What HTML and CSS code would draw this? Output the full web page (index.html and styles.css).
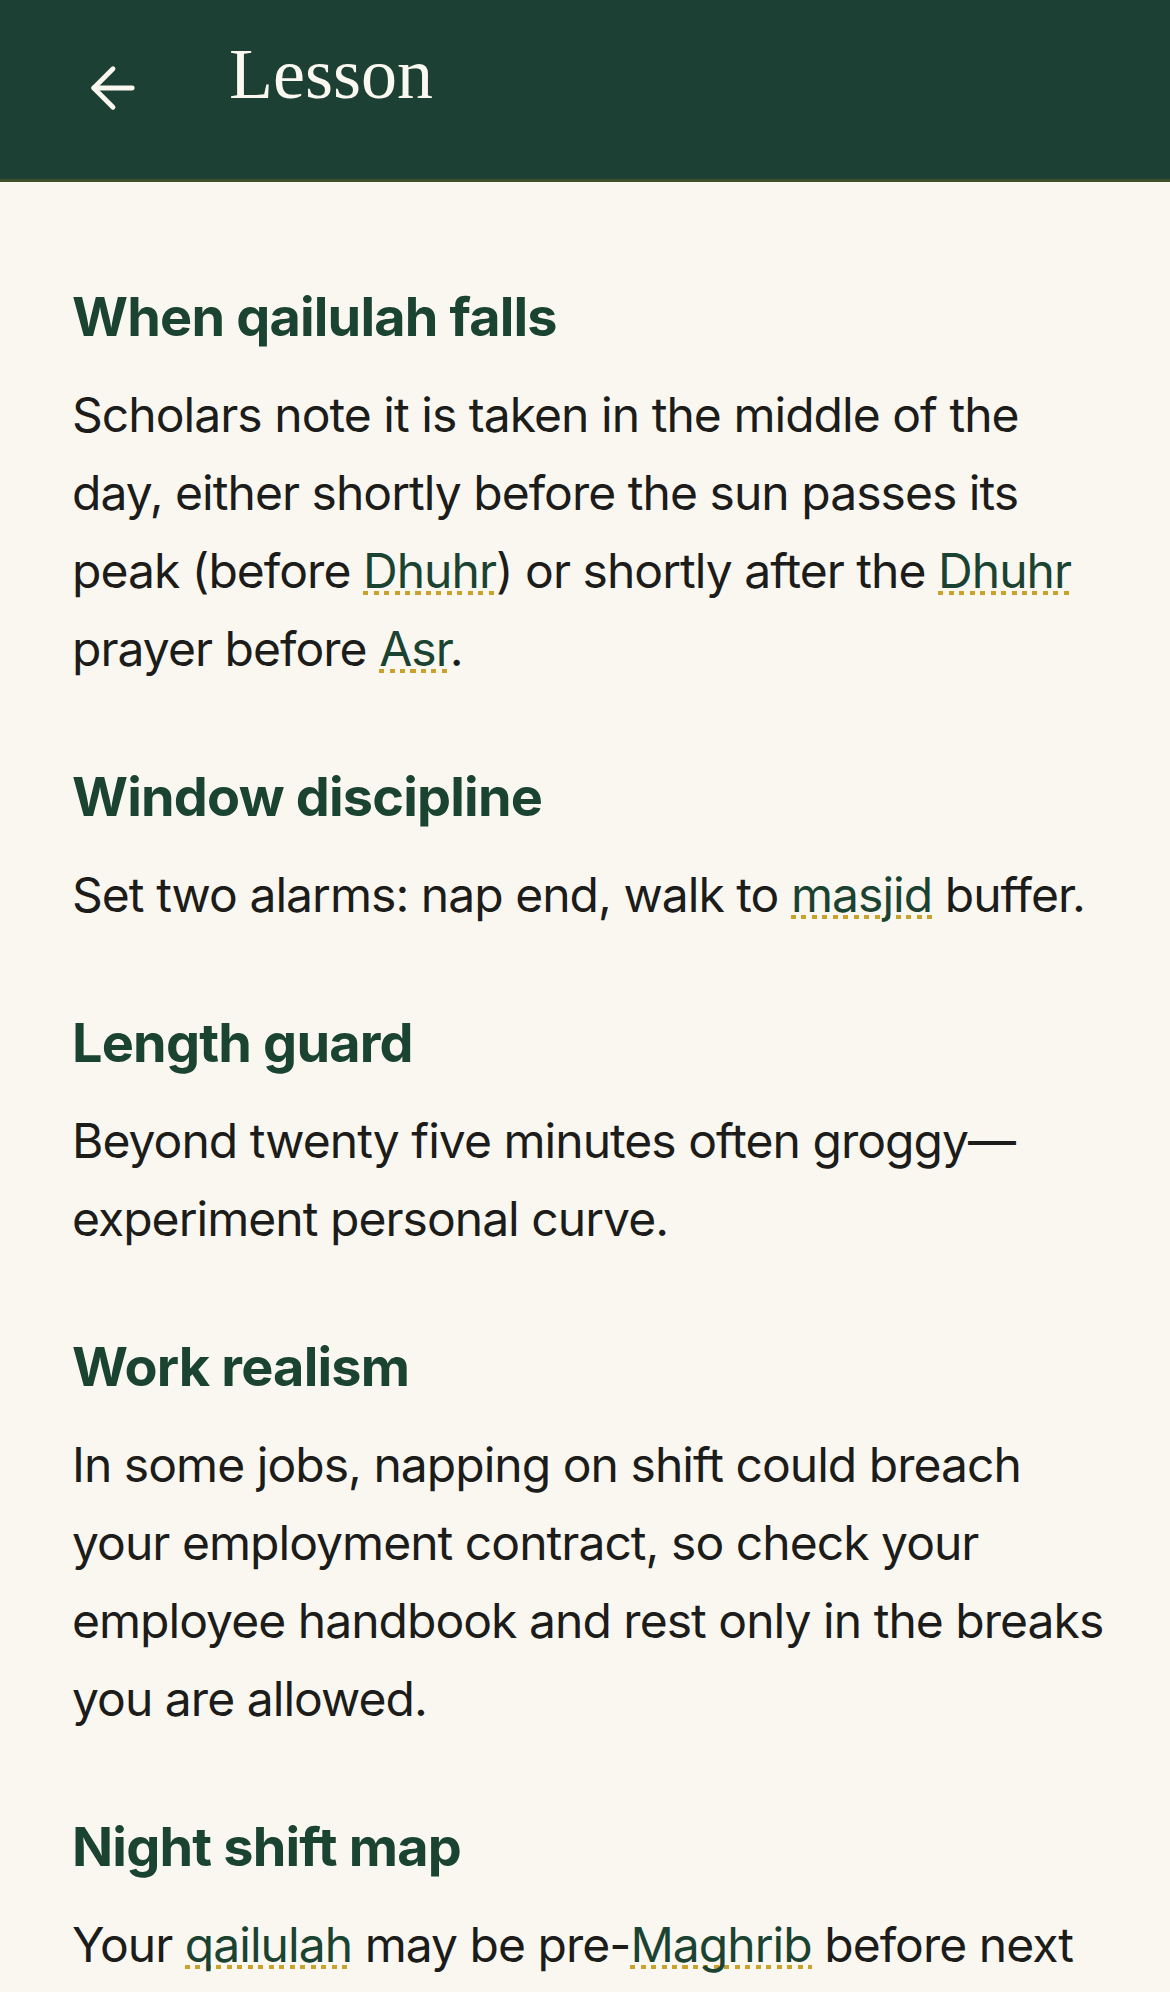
FILE: index.html
```html
<!DOCTYPE html>
<html lang="en">
<head>
<meta charset="utf-8">
<title>Lesson</title>
<link rel="stylesheet" href="styles.css">
</head>
<body>
<header class="topbar">
  <button class="back" aria-label="Back">
    <svg class="back-icon" viewBox="0 0 24 24" fill="none" stroke="currentColor" stroke-width="1.75" stroke-linecap="round" stroke-linejoin="round"><path d="M19 12H5"/><path d="M12 19l-7-7 7-7"/></svg>
  </button>
  <h1 class="title">Lesson</h1>
</header>
<main class="lesson">
  <section class="block">
    <h2 class="block-title">When qailulah falls</h2>
    <p class="block-text">Scholars note it is taken in the middle of the day, either shortly before the sun passes its peak (before <span class="term">Dhuhr</span>) or shortly after the <span class="term">Dhuhr</span> prayer before <span class="term">Asr</span>.</p>
  </section>
  <section class="block">
    <h2 class="block-title">Window discipline</h2>
    <p class="block-text">Set two alarms: nap end, walk to <span class="term">masjid</span> buffer.</p>
  </section>
  <section class="block">
    <h2 class="block-title">Length guard</h2>
    <p class="block-text">Beyond twenty five minutes often groggy—experiment personal curve.</p>
  </section>
  <section class="block">
    <h2 class="block-title">Work realism</h2>
    <p class="block-text">In some jobs, napping on shift could breach your employment contract, so check your employee handbook and rest only in the breaks you are allowed.</p>
  </section>
  <section class="block">
    <h2 class="block-title">Night shift map</h2>
    <p class="block-text">Your <span class="term">qailulah</span> may be pre-<span class="term">Maghrib</span> before next shift if nights invert your day.</p>
  </section>
</main>
</body>
</html>
```

FILE: styles.css
```css
* { box-sizing: border-box; }
html, body { margin: 0; padding: 0; }
body {
  background: #faf7f0;
  color: #1c1c1a;
  font-family: Inter, "Noto Sans", "Liberation Sans", sans-serif;
}
.topbar {
  display: flex;
  align-items: flex-start;
  height: 182px;
  padding-left: 80px;
  background: #1c4033;
  border-bottom: 3px solid #3f4f2c;
}
.back {
  margin: 55px 0 0 0;
  padding: 0;
  border: 0;
  background: none;
  color: #fbf8f1;
  width: 66px;
  height: 66px;
  display: flex;
}
.back-icon { width: 66px; height: 66px; display: block; }
.title {
  margin: 38px 0 0 83px;
  font-family: "Liberation Serif", "Times New Roman", serif;
  font-weight: 400;
  font-size: 72px;
  line-height: 72px;
  color: #fbf8f1;
}
.lesson {
  padding: 100px 56px 40px 72px;
  display: flex;
  flex-direction: column;
  gap: 74px;
}
.block { display: flex; flex-direction: column; gap: 24px; }
.block-title {
  margin: 0;
  font-size: 54px;
  line-height: 70px;
  font-weight: 700;
  letter-spacing: -0.015em;
  color: #1b4332;
}
.block-text {
  margin: 0;
  font-size: 48px;
  line-height: 78px;
  font-weight: 400;
  letter-spacing: -0.02em;
}
.term {
  color: #1b4332;
  background-image: repeating-linear-gradient(90deg, #c9a12b 0 5px, transparent 5px 10.5px);
  background-repeat: no-repeat;
  background-size: 100% 4px;
  background-position: left 0 bottom 5px;
}
```
